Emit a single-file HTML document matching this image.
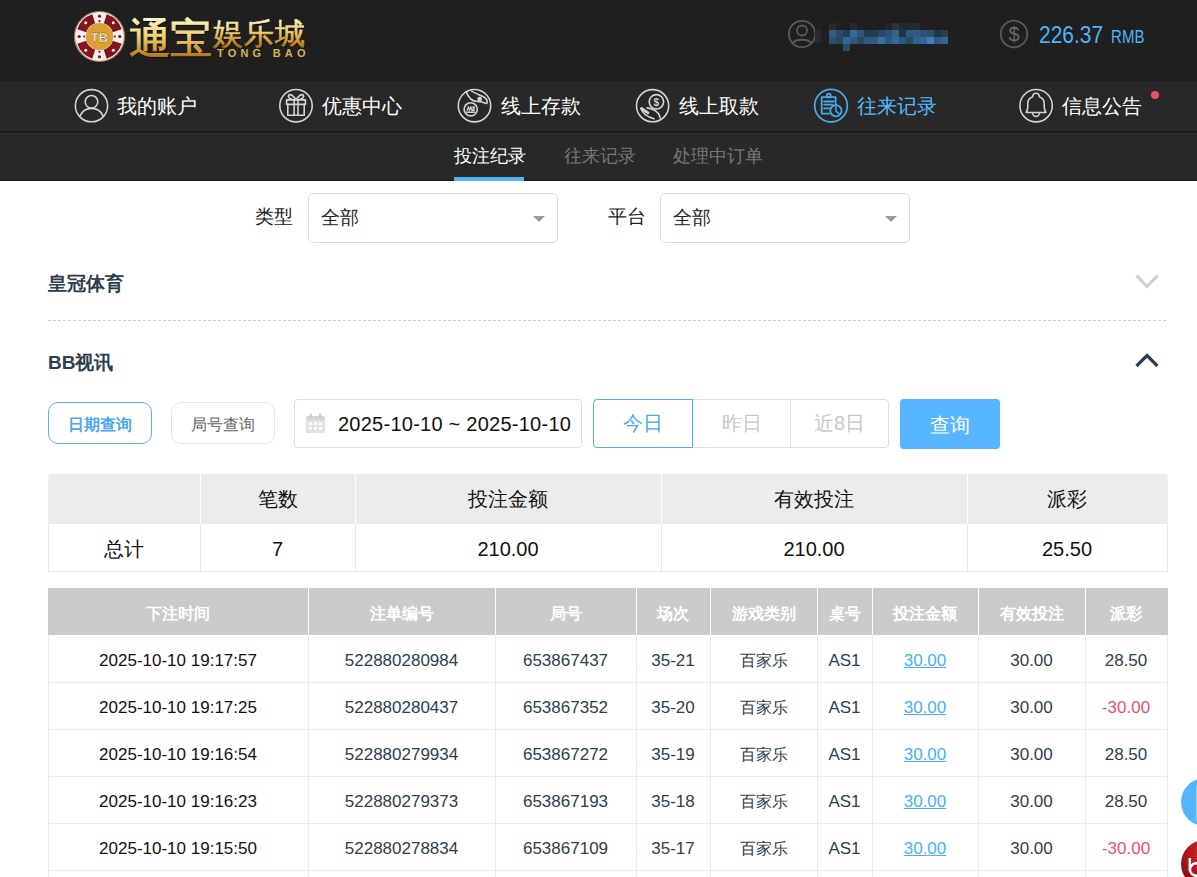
<!DOCTYPE html>
<html><head><meta charset="utf-8">
<style>
*{margin:0;padding:0;box-sizing:border-box}
html,body{width:1197px;height:877px;overflow:hidden;background:#fff;font-family:"Liberation Sans",sans-serif}
.abs{position:absolute}
#top{position:absolute;left:0;top:0;width:1197px;height:81px;background:#1f1f1f}
#nav{position:absolute;left:0;top:81px;width:1197px;height:50px;background:#282828}
#navline{position:absolute;left:0;top:131px;width:1197px;height:2px;background:#1a1a1a}
#sub{position:absolute;left:0;top:133px;width:1197px;height:48px;background:#282828;border-bottom:1px solid #1a1a1a;border-top:1px solid #303030}
.nv{position:absolute;top:95px;font-size:20px;line-height:22px;color:#fff;white-space:nowrap}
.ni{position:absolute;top:89px;width:34px;height:34px}
.sn{position:absolute;top:144px;font-size:18px;line-height:24px;color:#777;white-space:nowrap}
.lbl{position:absolute;font-size:19px;line-height:24px;color:#222;white-space:nowrap}
.sel{position:absolute;top:193px;width:250px;height:50px;border:1px solid #ddd;border-radius:5px;background:#fff}
.sel span{position:absolute;left:12px;top:12px;font-size:19px;line-height:24px;color:#222}
.sel i{position:absolute;left:224px;top:22px;width:0;height:0;border-left:6px solid transparent;border-right:6px solid transparent;border-top:6px solid #999}
.blk i{position:absolute;width:7px;height:7px}
.seg{top:399px;height:49px;font-size:20px;line-height:49px;text-align:center}
.st{font-size:20px;line-height:26px;text-align:center;color:#111;white-space:nowrap}
.dh{top:588px;height:47px;line-height:51px;font-size:16px;font-weight:bold;color:#fff;text-align:center;white-space:nowrap}
.dc{height:47px;line-height:52px;font-size:17px;color:#2c3e50;text-align:center;white-space:nowrap}
.dc u{text-underline-offset:1px}
.sec{position:absolute;left:48px;font-size:19px;font-weight:bold;color:#2c3e50;line-height:24px;white-space:nowrap}
</style></head>
<body>
<div id="top"></div>
<div id="nav"></div>
<div id="navline"></div>
<div id="sub"></div>

<!-- logo -->
<svg class="abs" style="left:0;top:0" width="320" height="81" viewBox="0 0 320 81">
<defs>
<linearGradient id="gold" x1="0" y1="0" x2="0" y2="1">
<stop offset="0" stop-color="#fff8d0"/><stop offset="0.45" stop-color="#f0d070"/><stop offset="0.8" stop-color="#c88a28"/><stop offset="1" stop-color="#8a5a18"/>
</linearGradient>
<radialGradient id="tbg" cx="0.45" cy="0.4" r="0.6"><stop offset="0" stop-color="#f3c86a"/><stop offset="1" stop-color="#b07a2a"/></radialGradient>
</defs>
<circle cx="99.5" cy="36.5" r="25" fill="#f4eeee" stroke="#a07a50" stroke-width="1.2"/>
<g fill="#821620"><path d="M103.83 23.19 L106.70 14.34 A23.3 23.3 0 0 1 121.66 29.30 L112.81 32.17 A14.0 14.0 0 0 0 103.83 23.19Z"/><path d="M112.81 40.83 L121.66 43.70 A23.3 23.3 0 0 1 106.70 58.66 L103.83 49.81 A14.0 14.0 0 0 0 112.81 40.83Z"/><path d="M95.17 49.81 L92.30 58.66 A23.3 23.3 0 0 1 77.34 43.70 L86.19 40.83 A14.0 14.0 0 0 0 95.17 49.81Z"/><path d="M86.19 32.17 L77.34 29.30 A23.3 23.3 0 0 1 92.30 14.34 L95.17 23.19 A14.0 14.0 0 0 0 86.19 32.17Z"/><circle cx="99.50" cy="16.20" r="1.6"/><circle cx="99.50" cy="21.20" r="1.1"/><circle cx="119.80" cy="36.50" r="1.6"/><circle cx="114.80" cy="36.50" r="1.1"/><circle cx="99.50" cy="56.80" r="1.6"/><circle cx="99.50" cy="51.80" r="1.1"/><circle cx="79.20" cy="36.50" r="1.6"/><circle cx="84.20" cy="36.50" r="1.1"/></g><circle cx="113.29" cy="22.71" r="1.5" fill="#f4eeee"/><circle cx="113.29" cy="50.29" r="1.5" fill="#f4eeee"/><circle cx="85.71" cy="50.29" r="1.5" fill="#f4eeee"/><circle cx="85.71" cy="22.71" r="1.5" fill="#f4eeee"/>

<circle cx="99.5" cy="36.5" r="13.6" fill="#dfa032"/>
<text x="99.5" y="41.5" text-anchor="middle" font-family="Liberation Sans" font-weight="bold" font-size="13" fill="#fbf8f0" stroke="#6a4a10" stroke-width="0.35">TB</text>
<g transform="translate(1 1.2)" fill="#000" opacity="0.55"><text x="129" y="53" font-family="Liberation Serif" font-size="42" letter-spacing="-1" stroke="#000" stroke-width="0.9">通宝</text><text x="213" y="44" font-family="Liberation Serif" font-size="30" letter-spacing="1" stroke="#000" stroke-width="0.6">娱乐城</text></g>
<text x="129" y="53" font-family="Liberation Serif" font-size="42" fill="url(#gold)" letter-spacing="-1" stroke="url(#gold)" stroke-width="0.9">通宝</text>
<text x="213" y="44" font-family="Liberation Serif" font-size="30" fill="url(#gold)" letter-spacing="1" stroke="url(#gold)" stroke-width="0.6">娱乐城</text>
<text x="217" y="57" font-family="Liberation Sans" font-weight="bold" font-size="11" fill="#d8b050" letter-spacing="4.2">TONG BAO</text>
</svg>

<!-- user -->
<svg class="abs" style="left:786px;top:18px" width="32" height="32" viewBox="0 0 32 32">
<g fill="none" stroke="#5a5a5a" stroke-width="1.8">
<circle cx="16" cy="16" r="13.2"/>
<circle cx="16" cy="12.5" r="5"/>
<path d="M6.5 25.5 C9 20.5 23 20.5 25.5 25.5"/>
</g></svg>
<div class="abs" style="left:815px;top:23px;width:6px;height:7px;background:#222"></div><div class="abs" style="left:815px;top:30px;width:6px;height:13px;background:#2a2a2a"></div>
<div class="abs blk" style="left:829px;top:23px;width:119px;height:28px"><i style="left:0px;top:0px;background:#222a35"></i><i style="left:21px;top:0px;background:#222a35"></i><i style="left:56px;top:0px;background:#20252b"></i><i style="left:63px;top:0px;background:#243540"></i><i style="left:70px;top:0px;background:#212a30"></i><i style="left:77px;top:0px;background:#21292f"></i><i style="left:84px;top:0px;background:#222a35"></i><i style="left:0px;top:7px;background:#345a88"></i><i style="left:7px;top:7px;background:#2d4a60"></i><i style="left:14px;top:7px;background:#26404f"></i><i style="left:21px;top:7px;background:#3669a0"></i><i style="left:28px;top:7px;background:#2f5570"></i><i style="left:35px;top:7px;background:#243a50"></i><i style="left:42px;top:7px;background:#253d52"></i><i style="left:49px;top:7px;background:#2a4668"></i><i style="left:56px;top:7px;background:#2c5080"></i><i style="left:63px;top:7px;background:#346878"></i><i style="left:70px;top:7px;background:#223448"></i><i style="left:77px;top:7px;background:#305a80"></i><i style="left:84px;top:7px;background:#305a80"></i><i style="left:91px;top:7px;background:#2e5475"></i><i style="left:98px;top:7px;background:#2b5068"></i><i style="left:105px;top:7px;background:#233845"></i><i style="left:112px;top:7px;background:#27404f"></i><i style="left:0px;top:14px;background:#2e4c78"></i><i style="left:7px;top:14px;background:#2b4a5a"></i><i style="left:14px;top:14px;background:#3465a0"></i><i style="left:21px;top:14px;background:#2f5a85"></i><i style="left:28px;top:14px;background:#2a4a62"></i><i style="left:35px;top:14px;background:#2f5a80"></i><i style="left:42px;top:14px;background:#305c80"></i><i style="left:49px;top:14px;background:#3670a8"></i><i style="left:56px;top:14px;background:#30587a"></i><i style="left:63px;top:14px;background:#3466a0"></i><i style="left:70px;top:14px;background:#2d5585"></i><i style="left:77px;top:14px;background:#2a4a5e"></i><i style="left:84px;top:14px;background:#306090"></i><i style="left:91px;top:14px;background:#33679a"></i><i style="left:98px;top:14px;background:#3d80b5"></i><i style="left:105px;top:14px;background:#2f5a8a"></i><i style="left:112px;top:14px;background:#336590"></i><i style="left:14px;top:21px;background:#2a5068"></i></div>

<!-- balance -->
<svg class="abs" style="left:998px;top:18px" width="32" height="32" viewBox="0 0 32 32">
<circle cx="16" cy="16" r="13.3" fill="none" stroke="#5a5a5a" stroke-width="1.8"/>
<text x="16" y="23" text-anchor="middle" font-family="Liberation Sans" font-size="20" fill="#6a6a6a">$</text>
</svg>
<div class="abs" style="left:1039px;top:24px;font-size:21px;line-height:24px;color:#4fb3f6;white-space:nowrap;transform:scaleY(1.17);transform-origin:0 18px">226.37 <span style="font-size:15px;margin-left:2px">RMB</span></div>


<!-- nav icons -->
<svg class="abs" style="left:0;top:81px" width="1197" height="50" viewBox="0 81 1197 50">
<g transform="translate(0 81)">
<g fill="none" stroke="#d4d4d4" stroke-width="1.6" stroke-linecap="round" stroke-linejoin="round">
<circle cx="91.5" cy="24.7" r="16.1"/>
<circle cx="91.5" cy="20.8" r="6.3"/>
<path d="M80.1 34.9 A12.45 12.45 0 0 1 103 34.9"/>

<circle cx="296" cy="24.7" r="16.2"/>
<rect x="286.6" y="18.9" width="18.8" height="4.5"/>
<path d="M287.8 23.4 V34.2 H304.2 V23.4"/>
<path d="M294.1 18.9 V34.2 M298 18.9 V34.2"/>
<path d="M296 18.9 C293.5 14.5 290 12.5 288.6 14.3 C287.5 16 290 18.5 294 18.9 M296 18.9 C298.5 14.5 302 12.5 303.4 14.3 C304.5 16 302 18.5 298 18.9"/>

<circle cx="474.5" cy="24.7" r="16.2"/>
<circle cx="470.7" cy="28.3" r="6.6"/>
<path d="M466.8 31.2 H474.5" stroke-width="1.4"/>
<path d="M467 29.8 L468.5 25.5 L469.5 29.8 L471 25.5 L472 29.8 M473 25.5 V29.8 M474.2 25.5 V29.8" stroke-width="1.1"/>
<path d="M466.2 10.5 C468 16 472 20.5 477.6 20.5 C481 20.5 484 21.5 486.2 22.4"/>
<path d="M471.6 10 C474 12 479 13.5 483 15.5 C486 17 487.5 19.5 487.2 21.9"/>
<circle cx="479.6" cy="18.2" r="1.6" fill="#d9d9d9"/>

<circle cx="652.6" cy="24.7" r="16.1"/>
<circle cx="656.4" cy="20.8" r="7.2"/>
<path d="M641 27.4 C642 31 646 35.5 654 37.8"/>
<path d="M647 26.9 C651 27.5 655 28.5 658.3 32.4 C659.5 34 660 35.5 660.1 37"/>
<path d="M641.5 27.5 L648 31.8" stroke-width="2.8"/>

<circle cx="1036.1" cy="24.7" r="16.2"/>
<path d="M1026.2 31.5 H1045.9 M1026.2 31.5 C1027 30 1027.8 28.5 1027.8 26 V22.5 C1027.8 18.5 1030 16.8 1032.5 16 C1032.8 13.5 1034 12.3 1036 12.3 C1038 12.3 1039.2 13.5 1039.5 16 C1042 16.8 1044.2 18.5 1044.2 22.5 V26 C1044.2 28.5 1045 30 1045.9 31.5"/>
<path d="M1032.6 32 A3.4 3.4 0 0 0 1039.4 32"/>
</g>
<text x="656.4" y="24.6" text-anchor="middle" font-family="Liberation Sans" font-weight="bold" font-size="10" fill="#d0d0d0">$</text>
<g fill="none" stroke="#4aa8e6" stroke-width="1.8" stroke-linecap="round" stroke-linejoin="round">
<circle cx="831" cy="24.7" r="16.3"/>
<path d="M835.6 23.5 V16.2 H821.7 V32.6 H829.5"/>
<circle cx="828.8" cy="14.6" r="1.9"/>
<path d="M824.2 20.5 H833.5 M824.2 23.6 H832.5 M824.2 27.4 H829"/>
<circle cx="835.9" cy="29.7" r="5.6"/>
<path d="M835.9 25.8 V30.2 L838.8 32.4" stroke-width="1.5"/>
</g>
</g>
</svg>

<!-- nav texts -->
<div class="nv" style="left:117px">我的账户</div>
<div class="nv" style="left:322px">优惠中心</div>
<div class="nv" style="left:501px">线上存款</div>
<div class="nv" style="left:679px">线上取款</div>
<div class="nv" style="left:857px;color:#55b8ff">往来记录</div>
<div class="nv" style="left:1062px">信息公告</div>
<div class="abs" style="left:1151px;top:91px;width:8px;height:8px;border-radius:50%;background:#f0506e"></div>

<!-- subnav -->
<div class="sn" style="left:454px;color:#fff">投注纪录</div>
<div class="sn" style="left:564px">往来记录</div>
<div class="sn" style="left:673px">处理中订单</div>
<div class="abs" style="left:454px;top:177px;width:70px;height:4px;background:#52b4f5"></div>

<!-- filters -->
<div class="lbl" style="left:255px;top:205px">类型</div>
<div class="sel" style="left:308px"><span>全部</span><i></i></div>
<div class="lbl" style="left:608px;top:205px">平台</div>
<div class="sel" style="left:660px"><span>全部</span><i></i></div>

<div class="sec" style="top:272px">皇冠体育</div>
<div class="sec" style="top:351px">BB视讯</div>

<svg class="abs" style="left:1133px;top:272px" width="28" height="18" viewBox="0 0 28 18"><path d="M3.5 3.5 L14 14.5 L24.5 3.5" fill="none" stroke="#cfcfcf" stroke-width="3.2"/></svg>
<div class="abs" style="left:48px;top:320px;width:1120px;height:1px;background:repeating-linear-gradient(90deg,#cfcfcf 0 3px,transparent 3px 5px)"></div>
<svg class="abs" style="left:1133px;top:351px" width="28" height="18" viewBox="0 0 28 18"><path d="M3.5 15 L14 4.5 L24.5 15" fill="none" stroke="#2c3e50" stroke-width="3.2"/></svg>


<div class="abs" style="left:48px;top:402px;width:104px;height:42px;border:1px solid #55b0f2;border-radius:10px;color:#4aa8ee;font-size:16px;line-height:43px;text-align:center;font-weight:bold">日期查询</div>
<div class="abs" style="left:171px;top:402px;width:104px;height:42px;border:1px solid #e6e6e6;border-radius:10px;color:#666;font-size:16px;line-height:43px;text-align:center">局号查询</div>
<div class="abs" style="left:294px;top:399px;width:288px;height:49px;border:1px solid #ddd;border-radius:4px"></div>
<svg class="abs" style="left:304px;top:412px" width="22" height="22" viewBox="0 0 22 22">
<rect x="2" y="4" width="19" height="17" rx="2" fill="#d5d5d5"/>
<rect x="2" y="8" width="19" height="13" fill="#e2e2e2"/>
<rect x="5.5" y="1.5" width="2.5" height="5" rx="1" fill="#cfcfcf"/><rect x="15" y="1.5" width="2.5" height="5" rx="1" fill="#cfcfcf"/>
<g fill="#fff"><rect x="5" y="10.5" width="3" height="2.5"/><rect x="10" y="10.5" width="3" height="2.5"/><rect x="15" y="10.5" width="3" height="2.5"/><rect x="5" y="15" width="3" height="2.5"/><rect x="10" y="15" width="3" height="2.5"/><rect x="15" y="15" width="3" height="2.5"/></g>
</svg>
<div class="abs" style="left:338px;top:411px;font-size:20px;line-height:26px;color:#111;white-space:nowrap;letter-spacing:0.25px">2025-10-10 ~ 2025-10-10</div>
<div class="abs" style="left:593px;top:399px;width:296px;height:49px;border:1px solid #ddd;border-radius:4px"></div>
<div class="abs" style="left:593px;top:399px;width:100px;height:49px;border:1px solid #55b0f2;border-radius:4px 0 0 4px"></div>
<div class="abs" style="left:790px;top:400px;width:1px;height:47px;background:#ddd"></div>
<div class="abs seg" style="left:593px;width:100px;color:#4aa8ee">今日</div>
<div class="abs seg" style="left:692px;width:99px;color:#c8c8c8">昨日</div>
<div class="abs seg" style="left:790px;width:99px;color:#c8c8c8">近8日</div>
<div class="abs" style="left:900px;top:399px;width:100px;height:50px;border-radius:4px;background:#56b6ff;color:#fff;font-size:20px;line-height:52px;text-align:center">查询</div>

<div class="abs" style="left:48px;top:474px;width:1120px;height:50px;background:#ececec;border-radius:4px 4px 0 0"></div><div class="abs" style="left:48px;top:524px;width:1120px;height:48px;border:1px solid #e8e8e8;border-top:none"></div><div class="abs" style="left:200px;top:474px;width:1px;height:50px;background:#fff"></div><div class="abs" style="left:200px;top:524px;width:1px;height:48px;background:#e8e8e8"></div><div class="abs" style="left:355px;top:474px;width:1px;height:50px;background:#fff"></div><div class="abs" style="left:355px;top:524px;width:1px;height:48px;background:#e8e8e8"></div><div class="abs" style="left:661px;top:474px;width:1px;height:50px;background:#fff"></div><div class="abs" style="left:661px;top:524px;width:1px;height:48px;background:#e8e8e8"></div><div class="abs" style="left:967px;top:474px;width:1px;height:50px;background:#fff"></div><div class="abs" style="left:967px;top:524px;width:1px;height:48px;background:#e8e8e8"></div><div class="abs st" style="left:48px;top:536px;width:152px">总计</div><div class="abs st" style="left:200px;top:486px;width:155px">笔数</div><div class="abs st" style="left:200px;top:536px;width:155px">7</div><div class="abs st" style="left:355px;top:486px;width:306px">投注金额</div><div class="abs st" style="left:355px;top:536px;width:306px">210.00</div><div class="abs st" style="left:661px;top:486px;width:306px">有效投注</div><div class="abs st" style="left:661px;top:536px;width:306px">210.00</div><div class="abs st" style="left:967px;top:486px;width:200px">派彩</div><div class="abs st" style="left:967px;top:536px;width:200px">25.50</div>
<div class="abs" style="left:48px;top:588px;width:1120px;height:47px;background:#cbcbcb"></div><div class="abs" style="left:48px;top:635px;width:1120px;height:242px;border-left:1px solid #ececec;border-right:1px solid #ececec"></div><div class="abs" style="left:308px;top:588px;width:1px;height:47px;background:#fff"></div><div class="abs" style="left:308px;top:635px;width:1px;height:242px;background:#ececec"></div><div class="abs" style="left:495px;top:588px;width:1px;height:47px;background:#fff"></div><div class="abs" style="left:495px;top:635px;width:1px;height:242px;background:#ececec"></div><div class="abs" style="left:636px;top:588px;width:1px;height:47px;background:#fff"></div><div class="abs" style="left:636px;top:635px;width:1px;height:242px;background:#ececec"></div><div class="abs" style="left:710px;top:588px;width:1px;height:47px;background:#fff"></div><div class="abs" style="left:710px;top:635px;width:1px;height:242px;background:#ececec"></div><div class="abs" style="left:817px;top:588px;width:1px;height:47px;background:#fff"></div><div class="abs" style="left:817px;top:635px;width:1px;height:242px;background:#ececec"></div><div class="abs" style="left:872px;top:588px;width:1px;height:47px;background:#fff"></div><div class="abs" style="left:872px;top:635px;width:1px;height:242px;background:#ececec"></div><div class="abs" style="left:978px;top:588px;width:1px;height:47px;background:#fff"></div><div class="abs" style="left:978px;top:635px;width:1px;height:242px;background:#ececec"></div><div class="abs" style="left:1085px;top:588px;width:1px;height:47px;background:#fff"></div><div class="abs" style="left:1085px;top:635px;width:1px;height:242px;background:#ececec"></div><div class="abs" style="left:48px;top:682px;width:1120px;height:1px;background:#ececec"></div><div class="abs" style="left:48px;top:729px;width:1120px;height:1px;background:#ececec"></div><div class="abs" style="left:48px;top:776px;width:1120px;height:1px;background:#ececec"></div><div class="abs" style="left:48px;top:823px;width:1120px;height:1px;background:#ececec"></div><div class="abs" style="left:48px;top:870px;width:1120px;height:1px;background:#ececec"></div><div class="abs dh" style="left:48px;width:260px">下注时间</div><div class="abs dh" style="left:308px;width:187px">注单编号</div><div class="abs dh" style="left:495px;width:141px">局号</div><div class="abs dh" style="left:636px;width:74px">场次</div><div class="abs dh" style="left:710px;width:107px">游戏类别</div><div class="abs dh" style="left:817px;width:55px">桌号</div><div class="abs dh" style="left:872px;width:106px">投注金额</div><div class="abs dh" style="left:978px;width:107px">有效投注</div><div class="abs dh" style="left:1085px;width:82px">派彩</div><div class="abs dc" style="left:48px;top:635px;width:260px;color:#111">2025-10-10 19:17:57</div><div class="abs dc" style="left:308px;top:635px;width:187px">522880280984</div><div class="abs dc" style="left:495px;top:635px;width:141px">653867437</div><div class="abs dc" style="left:636px;top:635px;width:74px">35-21</div><div class="abs dc" style="left:710px;top:635px;width:107px;font-size:16px">百家乐</div><div class="abs dc" style="left:817px;top:635px;width:55px">AS1</div><div class="abs dc" style="left:872px;top:635px;width:106px;color:#48b0fa"><u>30.00</u></div><div class="abs dc" style="left:978px;top:635px;width:107px">30.00</div><div class="abs dc" style="left:1085px;top:635px;width:82px">28.50</div><div class="abs dc" style="left:48px;top:682px;width:260px;color:#111">2025-10-10 19:17:25</div><div class="abs dc" style="left:308px;top:682px;width:187px">522880280437</div><div class="abs dc" style="left:495px;top:682px;width:141px">653867352</div><div class="abs dc" style="left:636px;top:682px;width:74px">35-20</div><div class="abs dc" style="left:710px;top:682px;width:107px;font-size:16px">百家乐</div><div class="abs dc" style="left:817px;top:682px;width:55px">AS1</div><div class="abs dc" style="left:872px;top:682px;width:106px;color:#48b0fa"><u>30.00</u></div><div class="abs dc" style="left:978px;top:682px;width:107px">30.00</div><div class="abs dc" style="left:1085px;top:682px;width:82px;color:#f0506e">-30.00</div><div class="abs dc" style="left:48px;top:729px;width:260px;color:#111">2025-10-10 19:16:54</div><div class="abs dc" style="left:308px;top:729px;width:187px">522880279934</div><div class="abs dc" style="left:495px;top:729px;width:141px">653867272</div><div class="abs dc" style="left:636px;top:729px;width:74px">35-19</div><div class="abs dc" style="left:710px;top:729px;width:107px;font-size:16px">百家乐</div><div class="abs dc" style="left:817px;top:729px;width:55px">AS1</div><div class="abs dc" style="left:872px;top:729px;width:106px;color:#48b0fa"><u>30.00</u></div><div class="abs dc" style="left:978px;top:729px;width:107px">30.00</div><div class="abs dc" style="left:1085px;top:729px;width:82px">28.50</div><div class="abs dc" style="left:48px;top:776px;width:260px;color:#111">2025-10-10 19:16:23</div><div class="abs dc" style="left:308px;top:776px;width:187px">522880279373</div><div class="abs dc" style="left:495px;top:776px;width:141px">653867193</div><div class="abs dc" style="left:636px;top:776px;width:74px">35-18</div><div class="abs dc" style="left:710px;top:776px;width:107px;font-size:16px">百家乐</div><div class="abs dc" style="left:817px;top:776px;width:55px">AS1</div><div class="abs dc" style="left:872px;top:776px;width:106px;color:#48b0fa"><u>30.00</u></div><div class="abs dc" style="left:978px;top:776px;width:107px">30.00</div><div class="abs dc" style="left:1085px;top:776px;width:82px">28.50</div><div class="abs dc" style="left:48px;top:823px;width:260px;color:#111">2025-10-10 19:15:50</div><div class="abs dc" style="left:308px;top:823px;width:187px">522880278834</div><div class="abs dc" style="left:495px;top:823px;width:141px">653867109</div><div class="abs dc" style="left:636px;top:823px;width:74px">35-17</div><div class="abs dc" style="left:710px;top:823px;width:107px;font-size:16px">百家乐</div><div class="abs dc" style="left:817px;top:823px;width:55px">AS1</div><div class="abs dc" style="left:872px;top:823px;width:106px;color:#48b0fa"><u>30.00</u></div><div class="abs dc" style="left:978px;top:823px;width:107px">30.00</div><div class="abs dc" style="left:1085px;top:823px;width:82px;color:#f0506e">-30.00</div>

<div class="abs" style="left:1181px;top:778px;width:48px;height:48px;border-radius:50%;background:#55b5fb"></div>
<div class="abs" style="left:1196px;top:786px;width:1px;height:34px;background:#9fd3ff"></div>
<div class="abs" style="left:1181px;top:840px;width:48px;height:48px;border-radius:50%;background:radial-gradient(circle at 62% 28%,#e64a48 0,#c02020 35%,#8e0e10 75%,#6a0808 100%)"></div>
<svg class="abs" style="left:1181px;top:840px" width="16" height="37" viewBox="0 0 16 37"><path d="M8.8 18 V31" fill="none" stroke="#fff" stroke-width="2.4"/><circle cx="15.3" cy="29.5" r="6.3" fill="none" stroke="#fff" stroke-width="2.4"/></svg>

</body></html>
